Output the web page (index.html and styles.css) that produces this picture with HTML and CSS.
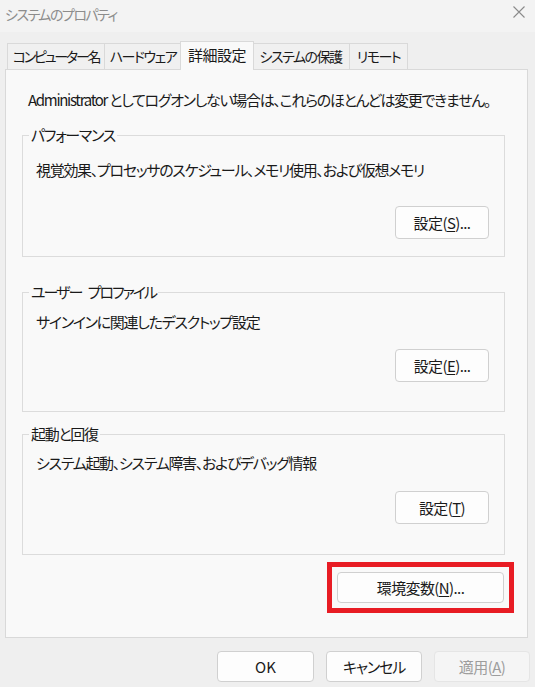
FILE: index.html
```html
<!DOCTYPE html>
<html lang="ja">
<head>
<meta charset="utf-8">
<title>システムのプロパティ</title>
<link rel="stylesheet" href="styles.css">
</head>
<body>
<div class="window">
  <header class="titlebar">
    <span class="title">システムのプロパティ</span>
    <svg class="close" width="12" height="12" viewBox="0 0 12 12" aria-label="閉じる">
      <path d="M0.5 0.5 L11.5 11.5 M11.5 0.5 L0.5 11.5" stroke="#8a8a8a" stroke-width="1.1" fill="none"/>
    </svg>
  </header>
  <nav class="tabs">
    <div class="tab tab-name">コンピューター名</div>
    <div class="tab tab-hw">ハードウェア</div>
    <div class="tab tab-adv active">詳細設定</div>
    <div class="tab tab-prot">システムの保護</div>
    <div class="tab tab-remote">リモート</div>
  </nav>
  <main class="panel">
    <p class="notice">Administrator としてログオンしない場合は、これらのほとんどは変更できません。</p>
    <fieldset class="group g1">
      <legend>パフォーマンス</legend>
      <p class="desc">視覚効果、プロセッサのスケジュール、メモリ使用、および仮想メモリ</p>
      <div class="row"><button class="btn btn-set">設定(<u>S</u>)...</button></div>
    </fieldset>
    <fieldset class="group g2">
      <legend>ユーザー プロファイル</legend>
      <p class="desc">サインインに関連したデスクトップ設定</p>
      <div class="row"><button class="btn btn-set">設定(<u>E</u>)...</button></div>
    </fieldset>
    <fieldset class="group g3">
      <legend>起動と回復</legend>
      <p class="desc">システム起動、システム障害、およびデバッグ情報</p>
      <div class="row"><button class="btn btn-set">設定(<u>T</u>)</button></div>
    </fieldset>
    <div class="env-row">
      <div class="highlight"><button class="btn btn-env">環境変数(<u>N</u>)...</button></div>
    </div>
  </main>
  <footer class="actions">
    <button class="btn btn-ok">OK</button>
    <button class="btn btn-foot">キャンセル</button>
    <button class="btn btn-foot" disabled>適用(<u>A</u>)</button>
  </footer>
</div>
</body>
</html>
```
FILE: styles.css
```css
* { box-sizing: border-box; }
html, body {
  margin: 0;
  padding: 0;
  background: #efefef;
}
body {
  font-family: "Noto Sans CJK JP", "Noto Sans", sans-serif;
  font-size: 15px;
  line-height: 20px;
  letter-spacing: -1.3px;
  color: #1a1a1a;
  font-feature-settings: "palt";
}
.window {
  width: 535px;
  height: 687px;
  overflow: hidden;
}
.titlebar {
  height: 32px;
  display: flex;
  justify-content: space-between;
  align-items: flex-start;
  padding: 4px 10px 0 5px;
  background: #f3f3f3;
}
.title {
  color: #8c8c8c;
  font-size: 14px;
  letter-spacing: -1.5px;
}
.close {
  margin-top: 2px;
}
.tabs {
  display: flex;
  align-items: flex-end;
  padding: 9px 0 0 7px;
}
.tab {
  height: 26px;
  padding-top: 2px;
  border: 1px solid #d9d9d9;
  border-bottom: none;
  background: #f0f0f0;
  margin-left: -1px;
  white-space: nowrap;
  text-align: center;
  font-size: 14px;
  letter-spacing: -1.5px;
}
.tab:first-child { margin-left: 0; }
.tab-name { width: 98px; letter-spacing: -2.2px; }
.tab-hw { width: 78px; }
.tab-adv { width: 74px; }
.tab-prot { width: 99px; }
.tab-remote { width: 59px; }
.tab.active {
  position: relative;
  z-index: 1;
  height: 29px;
  padding-top: 3px;
  margin: 0 -2px -1px -2px;
  background: #f9f9f9;
  font-size: 15px;
  letter-spacing: -0.5px;
}
.panel {
  margin-left: 5px;
  width: 523px;
  height: 569px;
  border: 1px solid #d9d9d9;
  background: #f9f9f9;
  overflow: hidden;
}
.notice {
  margin: 20px 0 0 22px;
  white-space: nowrap;
}
.group {
  margin: 0 22px 0 16px;
  padding: 0;
  min-width: 0;
  border: 1px solid #dcdcdc;
}
.group legend {
  margin-left: 6px;
  padding: 0 2px;
  line-height: 20px;
}
.g2 legend { letter-spacing: -2px; word-spacing: 5px; }
.desc {
  margin: 0 0 0 13px;
  white-space: nowrap;
}
.row {
  display: flex;
  justify-content: flex-end;
  padding-right: 15px;
}
.g1 { margin-top: 15px; padding-bottom: 17px; }
.g1 .desc { margin-top: 15px; }
.g1 .row { margin-top: 26px; }
.g2 { margin-top: 25px; padding-bottom: 29px; }
.g2 .desc { margin-top: 10px; }
.g2 .row { margin-top: 17px; }
.g3 { margin-top: 12px; padding-bottom: 30px; }
.g3 .desc { margin-top: 9px; }
.g3 .row { margin-top: 18px; }
.btn {
  font: inherit;
  letter-spacing: -0.6px;
  font-feature-settings: "palt";
  color: #1a1a1a;
  background: #fdfdfd;
  border: 1px solid #d0d0d0;
  border-radius: 4px;
  padding: 0;
  line-height: 20px;
}
.btn u { text-underline-offset: 2px; }
.btn-set { width: 94px; height: 33px; }
.env-row {
  display: flex;
  justify-content: flex-end;
  margin-top: 7px;
  padding-right: 13px;
}
.highlight {
  border: 5px solid #e81c24;
  padding: 5px;
}
.btn-env { width: 167px; height: 31px; }
.actions {
  display: flex;
  justify-content: flex-end;
  gap: 12px;
  padding: 13px 5px 0 0;
}
.btn-ok { width: 97px; height: 31px; letter-spacing: 0; }
.btn-foot { width: 96px; height: 31px; letter-spacing: -1.2px; }
.btn:disabled {
  color: #9d9d9d;
  background: #f5f5f5;
  border-color: #e5e5e5;
  letter-spacing: -0.6px;
}
```
